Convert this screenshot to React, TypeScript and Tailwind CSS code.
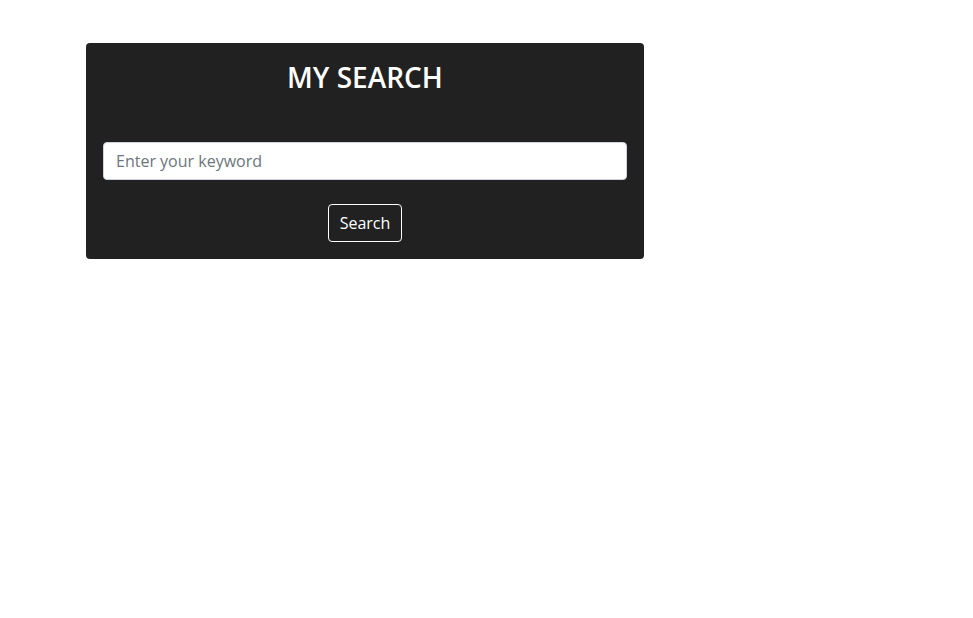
import React from "react";

export default function App() {
  return (
    <div className="min-h-screen bg-white" style={{ fontFamily: '"Open Sans", "Noto Sans", sans-serif' }}>
      <div className="pt-[43px] pl-[86px]">
        <div className="w-[558px] rounded-[4px] bg-[#212121] px-[17px] pt-[18px] pb-[17px]">
          <h3 className="text-center text-[28px] font-semibold leading-[1.2] text-white mb-[47px]">MY SEARCH</h3>
          <input
            type="text"
            placeholder="Enter your keyword"
            className="block w-full h-[38px] rounded-[4px] border border-[#ced4da] bg-white px-[12px] text-[16px] text-[#212529] placeholder:text-[#6c757d] outline-none"
          />
          <div className="mt-[24px] flex justify-center">
            <button className="h-[38px] rounded-[4px] border border-white px-[11px] text-[16px] text-white">
              Search
            </button>
          </div>
        </div>
      </div>
    </div>
  );
}
